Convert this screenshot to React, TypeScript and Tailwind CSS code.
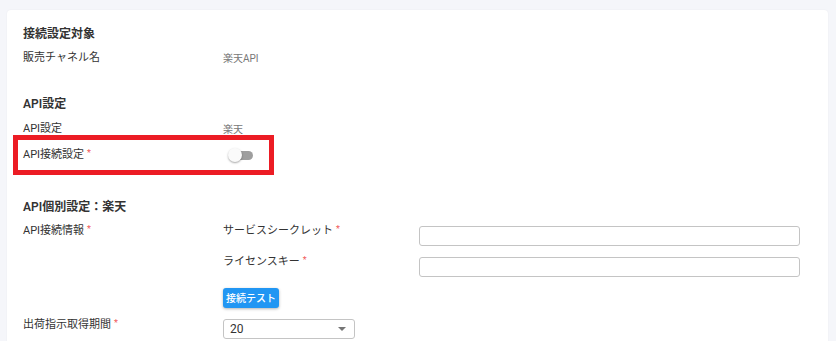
import React from "react";

const font = { fontFamily: "Roboto, 'Noto Sans CJK JP', sans-serif" };

function Req() {
  return <span className="relative -top-[2px] ml-[3px] text-[9px] text-[#f15a5a]">*</span>;
}

function Row({ label, children, required }: { label: string; children?: React.ReactNode; required?: boolean }) {
  return (
    <div className="flex h-[18px] items-center">
      <div className="w-[200px] text-[11px] leading-[18px] text-[#333]">
        {label}
        {required ? <Req /> : null}
      </div>
      {children}
    </div>
  );
}

function Heading({ children, className = "" }: { children: React.ReactNode; className?: string }) {
  return <div className={`h-[18px] text-[12px] font-semibold leading-[18px] text-[#333] ${className}`}>{children}</div>;
}

function TextInput() {
  return <div className="mt-[4px] h-[20px] w-[381px] rounded-[3px] border border-[#c4c4c4] bg-white" />;
}

export default function App() {
  return (
    <div className="min-h-screen bg-[#f5f6fa] pl-[7px] pr-[8px] pt-[10px]" style={font}>
      <div className="relative rounded bg-white px-4 pb-6 pt-[15px] shadow-[0_0_2px_rgba(0,0,0,0.06)]">
        <Heading>接続設定対象</Heading>
        <div className="mt-[6px]">
          <Row label="販売チャネル名">
            <span className="text-[10px] text-[#777]">楽天API</span>
          </Row>
        </div>

        <Heading className="mt-[28px]">API設定</Heading>
        <div className="mt-[7px]">
          <Row label="API設定">
            <span className="text-[10px] text-[#777]">楽天</span>
          </Row>
        </div>
        <div className="mt-[8px]">
          <Row label="API接続設定" required>
            <div className="relative ml-[5px] h-[14px] w-[25px]">
              <div className="absolute left-[2px] top-[3px] h-[9px] w-[23px] rounded-full bg-[#9e9e9e]" />
              <div className="absolute left-0 top-0 h-[14px] w-[14px] rounded-full bg-[#fafafa] shadow-[0_1px_2px_rgba(0,0,0,0.35)]" />
            </div>
          </Row>
        </div>

        <Heading className="mt-[34px]">API個別設定：楽天</Heading>
        <div className="mt-[6px] flex">
          <div className="w-[200px] text-[11px] leading-[18px] text-[#333]">
            API接続情報
            <Req />
          </div>
          <div className="flex flex-col">
            <div className="flex items-start">
              <div className="w-[196px] text-[11px] leading-[18px] text-[#333]">
                サービスシークレット
                <Req />
              </div>
              <TextInput />
            </div>
            <div className="mt-[7px] flex items-start">
              <div className="w-[196px] text-[11px] leading-[18px] text-[#333]">
                ライセンスキー
                <Req />
              </div>
              <TextInput />
            </div>
            <button
              type="button"
              className="mt-[11px] h-[20px] w-[56px] rounded-[3px] bg-[#2196f3] text-[10px] font-medium text-white shadow-[0_1px_3px_rgba(0,0,0,0.3)]"
            >
              接続テスト
            </button>
          </div>
        </div>

        <div className="mt-[8px] flex items-start">
          <div className="w-[200px] text-[11px] leading-[18px] text-[#333]">
            出荷指示取得期間
            <Req />
          </div>
          <div className="mt-[3px] flex h-[20px] w-[132px] items-center justify-between rounded-[3px] border border-[#c4c4c4] bg-white pl-[6px] pr-[8px]">
            <span className="text-[12px] text-[#333]">20</span>
            <svg width="8" height="4" viewBox="0 0 8 4">
              <path d="M0 0h8L4 4z" fill="#757575" />
            </svg>
          </div>
        </div>

        <div className="pointer-events-none absolute left-[6px] top-[125px] h-[40px] w-[261px] border-[5px] border-[#ec1c24]" />
      </div>
    </div>
  );
}
